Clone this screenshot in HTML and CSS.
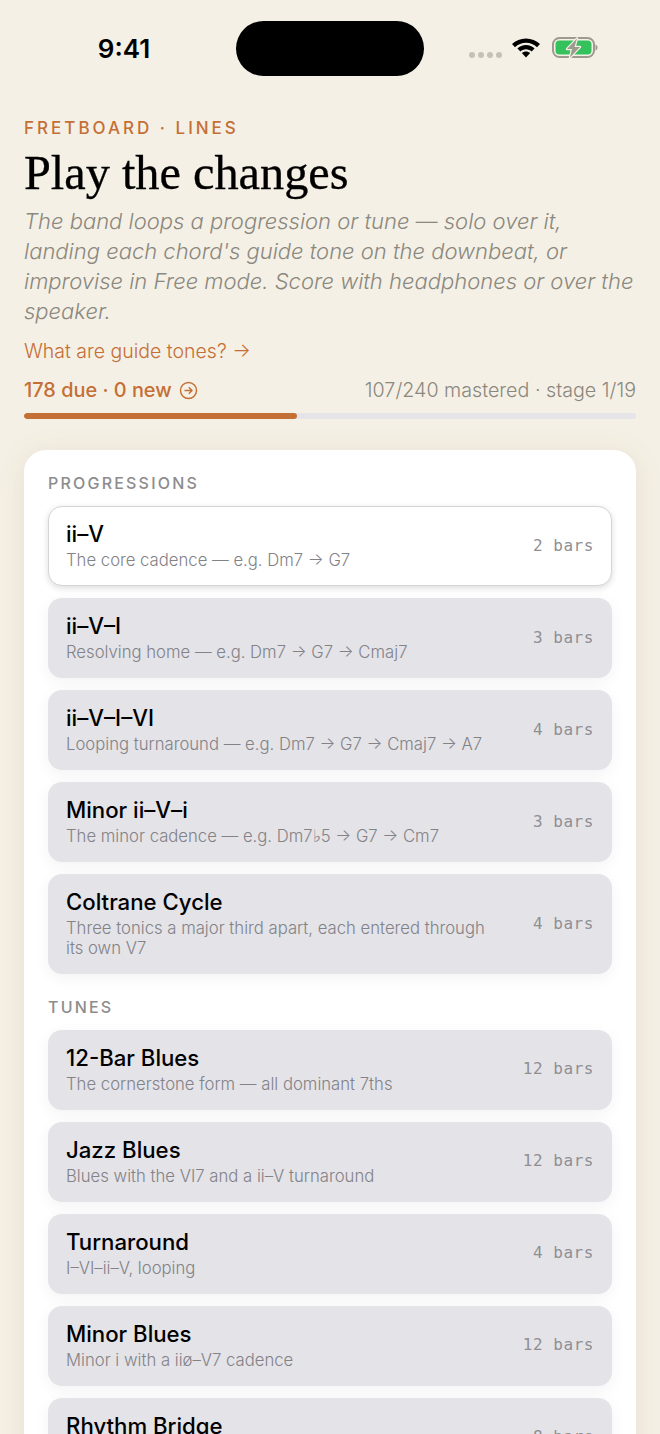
FILE: index.html
```html
<!DOCTYPE html>
<html lang="en">
<head>
<meta charset="utf-8">
<title>Fretboard Lines</title>
<link rel="stylesheet" href="styles.css">
</head>
<body>
<div class="status">
  <div class="time">9:41</div>
  <div class="island"></div>
  <div class="sys">
    <div class="dots"><i></i><i></i><i></i><i></i></div>
    <svg class="wifi" width="30" height="22" viewBox="0 0 30 22"><path d="M15 1.500C9.600 1.500 4.700 3.600 1 7l3 3.200C7 7.500 10.800 5.800 15 5.800s8 1.700 11 4.400L29 7C25.300 3.600 20.400 1.500 15 1.500z"/><path d="M15 8c-3.300 0-6.400 1.300-8.600 3.400l3 3.200c1.500-1.400 3.500-2.300 5.600-2.300s4.100.9 5.600 2.300l3-3.200C21.400 9.300 18.300 8 15 8z"/><path d="M15 14.400c-1.700 0-3.100.6-4.200 1.600l4.200 4.600 4.200-4.600c-1.100-1-2.500-1.600-4.200-1.600z"/></svg>
    <svg class="batt" width="46" height="24" viewBox="0 0 46 24"><rect x="1" y="2" width="41" height="19" rx="6.500" fill="none" stroke="#9d9a8f" stroke-width="2"/><rect x="3.500" y="4.500" width="36" height="14" rx="4" fill="#35c15c"/><path d="M43.500 8.500v6c1.300-.5 2-1.700 2-3s-.7-2.500-2-3z" fill="#9d9a8f"/><path d="M25 2.500L15 13h5l-2 8.500L28 11h-5.500z" fill="#9d9a8f" stroke="#f5f0e5" stroke-width="2.500" stroke-linejoin="round" paint-order="stroke"/></svg>
  </div>
</div>

<header class="head">
  <div class="eyebrow">FRETBOARD · LINES</div>
  <h1 class="title">Play the changes</h1>
  <p class="lede">The band loops a progression or tune — solo over it, landing each chord's guide tone on the downbeat, or improvise in Free mode. Score with headphones or over the speaker.</p>
  <a class="guide">What are guide tones? →</a>
  <div class="stats">
    <div class="due">178 due · 0 new
      <svg width="19" height="19" viewBox="0 0 19 19" fill="none" stroke="currentColor" stroke-width="1.400"><circle cx="9.500" cy="9.500" r="8"/><path d="M5.500 9.500h7.500M9.800 6.300l3.200 3.200-3.200 3.200"/></svg>
    </div>
    <div class="mastered">107/240 mastered · stage 1/19</div>
  </div>
  <div class="track"><div class="fill" style="width:44.600%"></div></div>
</header>

<main class="card">
  <h2 class="section first">PROGRESSIONS</h2>
  <div class="list">
    <div class="row selected"><div class="text"><div class="name">ii–V</div><div class="desc">The core cadence — e.g. Dm7 → G7</div></div><div class="bars">2 bars</div></div>
    <div class="row"><div class="text"><div class="name">ii–V–I</div><div class="desc">Resolving home — e.g. Dm7 → G7 → Cmaj7</div></div><div class="bars">3 bars</div></div>
    <div class="row"><div class="text"><div class="name">ii–V–I–VI</div><div class="desc">Looping turnaround — e.g. Dm7 → G7 → Cmaj7 → A7</div></div><div class="bars">4 bars</div></div>
    <div class="row"><div class="text"><div class="name">Minor ii–V–i</div><div class="desc">The minor cadence — e.g. Dm7♭5 → G7 → Cm7</div></div><div class="bars">3 bars</div></div>
    <div class="row"><div class="text"><div class="name">Coltrane Cycle</div><div class="desc">Three tonics a major third apart, each entered through its own V7</div></div><div class="bars">4 bars</div></div>
  </div>
  <h2 class="section">TUNES</h2>
  <div class="list">
    <div class="row"><div class="text"><div class="name">12-Bar Blues</div><div class="desc">The cornerstone form — all dominant 7ths</div></div><div class="bars">12 bars</div></div>
    <div class="row"><div class="text"><div class="name">Jazz Blues</div><div class="desc">Blues with the VI7 and a ii–V turnaround</div></div><div class="bars">12 bars</div></div>
    <div class="row"><div class="text"><div class="name">Turnaround</div><div class="desc">I–VI–ii–V, looping</div></div><div class="bars">4 bars</div></div>
    <div class="row"><div class="text"><div class="name">Minor Blues</div><div class="desc">Minor i with a iiø–V7 cadence</div></div><div class="bars">12 bars</div></div>
    <div class="row"><div class="text"><div class="name">Rhythm Bridge</div><div class="desc">Dominants around the cycle</div></div><div class="bars">8 bars</div></div>
  </div>
</main>
</body>
</html>
```
FILE: styles.css
```css
* { box-sizing: border-box; }
html, body { margin: 0; height: 100%; overflow: hidden; }
body {
  background: #f5f0e5;
  font-family: Inter, "Liberation Sans", sans-serif;
  color: #000;
}
.status {
  display: grid;
  grid-template-columns: 236px 188px 1fr;
  height: 118px;
  padding-top: 21px;
  align-items: start;
}
.time {
  font-size: 26px;
  font-weight: 600;
  line-height: 55px;
  text-align: center;
  padding-left: 12px;
}
.island { height: 55px; background: #000; border-radius: 28px; }
.sys { display: flex; align-items: flex-start; padding-left: 45px; }
.dots { display: flex; gap: 3px; margin-top: 31px; }
.dots i { width: 6px; height: 6px; border-radius: 50%; background: #c4c1b7; }
.wifi { margin: 16px 0 0 9px; }
.batt { margin: 15px 0 0 11px; }

.head { padding: 0 24px; }
.eyebrow {
  font-size: 17px;
  line-height: 20px;
  font-weight: 500;
  letter-spacing: 3px;
  color: #c46f35;
}
.title {
  margin: 8px 0 0;
  font-family: "Liberation Serif", serif;
  font-size: 48.300px;
  line-height: 54px;
  font-weight: 400;
  -webkit-text-stroke: 0.3px #000;
}
.lede {
  margin: 6px 0 0;
  font-size: 22px;
  line-height: 30px;
  font-style: italic;
  font-weight: 300;
  color: #8a887f;
}
.guide {
  display: block;
  margin-top: 10px;
  font-size: 19.500px;
  line-height: 30px;
  font-weight: 300;
  color: #c46f35;
}
.stats {
  display: flex;
  justify-content: space-between;
  align-items: center;
  margin-top: 9px;
  height: 30px;
}
.due {
  display: flex;
  align-items: center;
  gap: 7px;
  font-size: 19.900px;
  font-weight: 500;
  color: #c46f35;
}
.mastered { font-size: 19.700px; font-weight: 300; color: #8a887f; }
.track {
  margin-top: 8px;
  height: 6px;
  border-radius: 3px;
  background: #e5e4e8;
  overflow: hidden;
}
.fill { height: 100%; border-radius: 3px; background: #c46f35; }

.card {
  margin: 31px 24px 0;
  padding: 24px;
  background: #fff;
  border-radius: 22px;
  box-shadow: 0 4px 30px rgba(120, 100, 60, 0.1);
}
.section {
  margin: 0;
  font-size: 16px;
  line-height: 20px;
  font-weight: 500;
  letter-spacing: 2.200px;
  color: #8c8c8c;
}
.section.first { margin-top: -1px; }
.list { display: flex; flex-direction: column; gap: 12px; margin: 13px 0 24px; }
.list + .section { margin-top: -1.500px; }
.row {
  display: flex;
  align-items: center;
  justify-content: space-between;
  gap: 32px;
  padding: 14px 18px 16px;
  background: #e4e3e8;
  border-radius: 14px;
  box-shadow: 0 4px 16px rgba(0, 0, 0, 0.05);
}
.row.selected {
  background: #fff;
  border: 1px solid #d5d5d8;
  padding: 13px 17px 15px;
  box-shadow: 0 2px 6px rgba(0, 0, 0, 0.14);
}
.name { font-size: 22.200px; line-height: 28px; font-weight: 500; margin-bottom: 2px; }
.desc { font-size: 16.700px; line-height: 20px; font-weight: 300; color: #828287; }
.bars {
  flex: none;
  font-family: "DejaVu Sans Mono", monospace;
  font-size: 16px;
  font-weight: 400;
  letter-spacing: 0.550px;
  color: #8f8f93;
}
```
